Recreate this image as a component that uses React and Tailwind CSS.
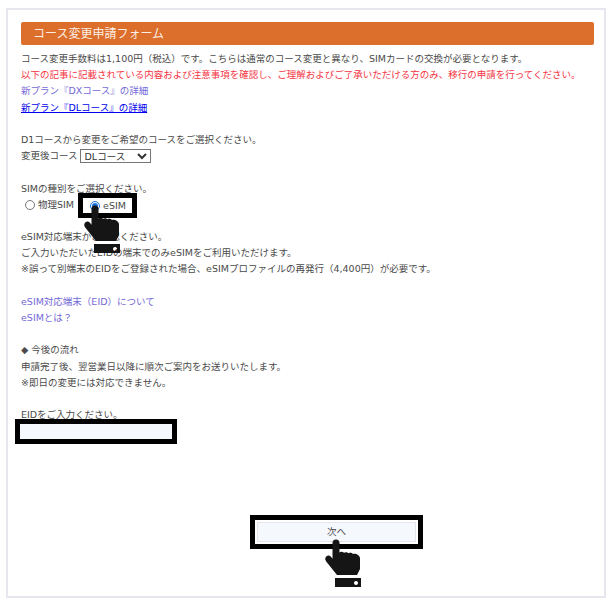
import React from 'react';

const Hand = ({ className }) => (
  <svg viewBox="0 0 38 48" className={className} fill="#151515">
    <path d="M7.500 4a3.500 3.500 0 0 1 7 0v9.500c1-.9 3.400-.9 4.500.3 1.200-1 3.500-.9 4.500.5 1.200-.8 3.400-.6 4.500.7 1.300-.6 3.700-.2 5 1 1.200 1 2 2 2 3.500V30l-3 6H12L1.200 22.500c-1.500-2-1.200-4 .3-5.300 1.500-1.200 3.300-.8 4.500.5l1.500 2z" />
    <path fillRule="evenodd" d="M10 39h26v9H10zM31 42a2 2 0 1 0 .01 0z" />
  </svg>
);

const Line = ({ className = '', children }) => <p className={`h-[16.200px] leading-[16.200px] whitespace-nowrap ${className}`}>{children}</p>;

const Gap = () => <div className="h-[16.200px]" />;

export default function App() {
  return (
    <div className="h-[606px] w-[614px] overflow-hidden bg-white pl-[6px] pt-[8px] font-['DejaVu_Sans','Noto_Sans_CJK_JP',sans-serif] text-[9.500px] text-[#4a4a4a]">
      <div className="flex h-[590px] w-[600px] flex-col border-2 border-[#e6e6ee] pl-[13px] pr-[10px] pt-[12px]">
        <h1 className="flex h-[23px] shrink-0 items-center rounded-[2px] bg-[#dc6f2c] pl-[12px] text-[12px] text-[#fbeee4]">コース変更申請フォーム</h1>

        <div className="mt-[6px]">
          <Line>コース変更手数料は1,100円（税込）です。こちらは通常のコース変更と異なり、SIMカードの交換が必要となります。</Line>
          <Line className="text-[#f5333f]">以下の記事に記載されている内容および注意事項を確認し、ご理解およびご了承いただける方のみ、移行の申請を行ってください。</Line>
          <Line><a className="text-[#7469d8]">新プラン『DXコース』の詳細</a></Line>
          <Line><a className="text-[#0000ee] underline">新プラン『DLコース』の詳細</a></Line>
          <Gap />
          <Line>D1コースから変更をご希望のコースをご選択ください。</Line>
          <Line className="flex items-center gap-[2px]">
            変更後コース
            <select className="h-[14px] w-[71px] border border-[#767676] bg-white py-0 text-[9.500px] leading-none text-[#333]">
              <option>DLコース</option>
            </select>
          </Line>
          <Gap />
          <Line>SIMの種別をご選択ください。</Line>
          <div className="relative flex h-[16.200px] items-center pl-[4px]">
            <label className="flex items-center gap-[3px]">
              <input type="radio" name="sim" className="m-0 h-[10px] w-[10px]" />
              物理SIM
            </label>
            <label className="ml-[9px] mt-[2px] flex h-[15px] w-[49px] items-center gap-[3px] pl-[7px] outline-[5px] outline-black">
              <input type="radio" name="sim" defaultChecked className="m-0 h-[10px] w-[10px] accent-[#1a73d8]" />
              eSIM
            </label>
            <Hand className="absolute left-[63px] top-[8px] h-[48px] w-[38px]" />
          </div>
          <Gap />
          <Line>eSIM対応端末かご確認ください。</Line>
          <Line>ご入力いただいたEIDの端末でのみeSIMをご利用いただけます。</Line>
          <Line>※誤って別端末のEIDをご登録された場合、eSIMプロファイルの再発行（4,400円）が必要です。</Line>
          <Gap />
          <Line><a className="text-[#7469d8]">eSIM対応端末（EID）について</a></Line>
          <Line><a className="text-[#7469d8]">eSIMとは？</a></Line>
          <Gap />
          <Line>◆ 今後の流れ</Line>
          <Line>申請完了後、翌営業日以降に順次ご案内をお送りいたします。</Line>
          <Line>※即日の変更には対応できません。</Line>
          <Gap />
          <Line>EIDをご入力ください。</Line>
          <input className="-ml-[6px] -mt-[4px] block h-[25px] w-[162px] border-[5px] border-black bg-[#f5f8fd]" />
        </div>

        <div className="relative mt-[71px] flex justify-center pl-[58px]">
          <div className="border-[5px] border-black bg-white p-[2px]">
            <button className="h-[20px] w-[159px] border border-[#e4e6ec] bg-[#f5f8fd] text-[9.500px] text-[#4a4a4a]">次へ</button>
          </div>
          <Hand className="absolute left-[304px] top-[24px] h-[48px] w-[38px]" />
        </div>
      </div>
    </div>
  );
}
